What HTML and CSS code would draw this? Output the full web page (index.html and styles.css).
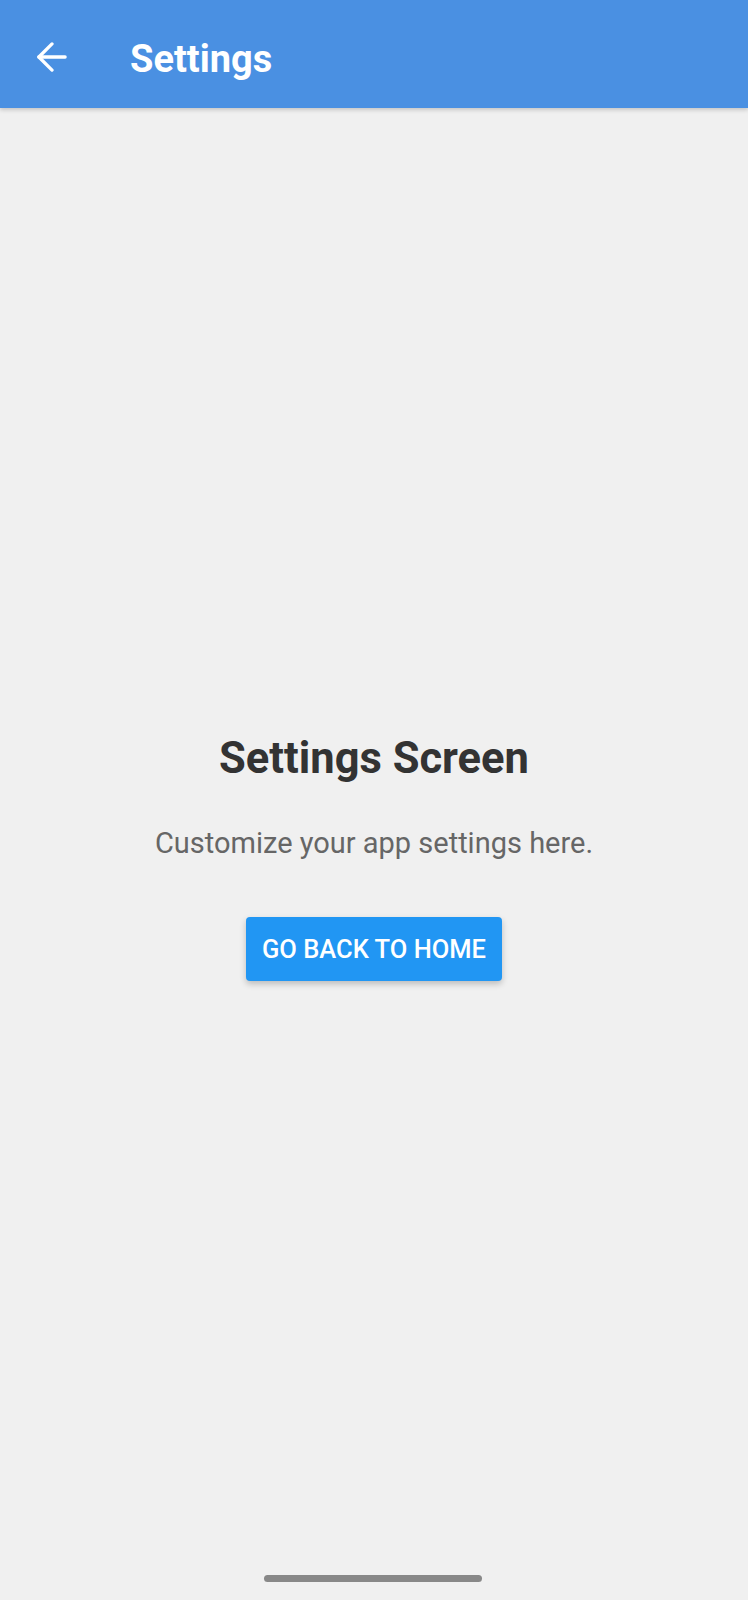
FILE: index.html
```html
<!DOCTYPE html>
<html>
<head>
<meta charset="utf-8">
<link rel="stylesheet" href="styles.css">
</head>
<body>
<div class="app">
  <header class="topbar">
    <button class="back" aria-label="Back">
      <svg width="30" height="30" viewBox="0 0 32 32" fill="none" stroke="#ffffff" stroke-width="3.5" stroke-linecap="round" stroke-linejoin="round">
        <path d="M30 16H2"/>
        <path d="M16 2L2 16L16 30"/>
      </svg>
    </button>
    <h1 class="topbar-title">Settings</h1>
  </header>
  <main class="content">
    <h2 class="heading">Settings Screen</h2>
    <p class="subtitle">Customize your app settings here.</p>
    <button class="primary">GO BACK TO HOME</button>
  </main>
  <div class="home-indicator"></div>
</div>
</body>
</html>
```

FILE: styles.css
```css
* { box-sizing: border-box; }
html, body {
  margin: 0;
  padding: 0;
  width: 748px;
  height: 1600px;
  background: #f0f0f0;
  font-family: Roboto, "Noto Sans", "Liberation Sans", sans-serif;
}
.app {
  position: relative;
  width: 748px;
  height: 1600px;
  display: flex;
  flex-direction: column;
}
.topbar {
  height: 108px;
  background: #4a90e2;
  display: flex;
  align-items: center;
  padding-left: 37px;
  padding-top: 6px;
  box-shadow: 0 2px 4px rgba(0, 0, 0, 0.18);
  position: relative;
  z-index: 1;
}
.back {
  background: none;
  border: 0;
  padding: 0;
  margin: 0;
  width: 30px;
  height: 30px;
  display: flex;
}
.topbar-title {
  margin: 0 0 0 63px;
  color: #ffffff;
  font-size: 38px;
  font-weight: 700;
  line-height: 44px;
  margin-top: 4px;
}
.content {
  flex: 1;
  display: flex;
  flex-direction: column;
  align-items: center;
  justify-content: center;
  padding-top: 6px;
}
.heading {
  margin: 0;
  font-size: 43.5px;
  line-height: 52px;
  font-weight: 700;
  color: #333333;
}
.subtitle {
  margin: 40px 0 56px;
  font-size: 29px;
  line-height: 36px;
  color: #666666;
}
.primary {
  height: 64px;
  padding: 0 16px;
  border: 0;
  border-radius: 4px;
  background: #2196f3;
  color: #ffffff;
  font-family: Roboto, "Noto Sans", sans-serif;
  font-size: 25.5px;
  font-weight: 500;
  box-shadow: 0 3px 6px rgba(0, 0, 0, 0.22);
}
.home-indicator {
  position: absolute;
  left: 264px;
  top: 1575px;
  width: 218px;
  height: 7px;
  border-radius: 4px;
  background: #888888;
}
```
